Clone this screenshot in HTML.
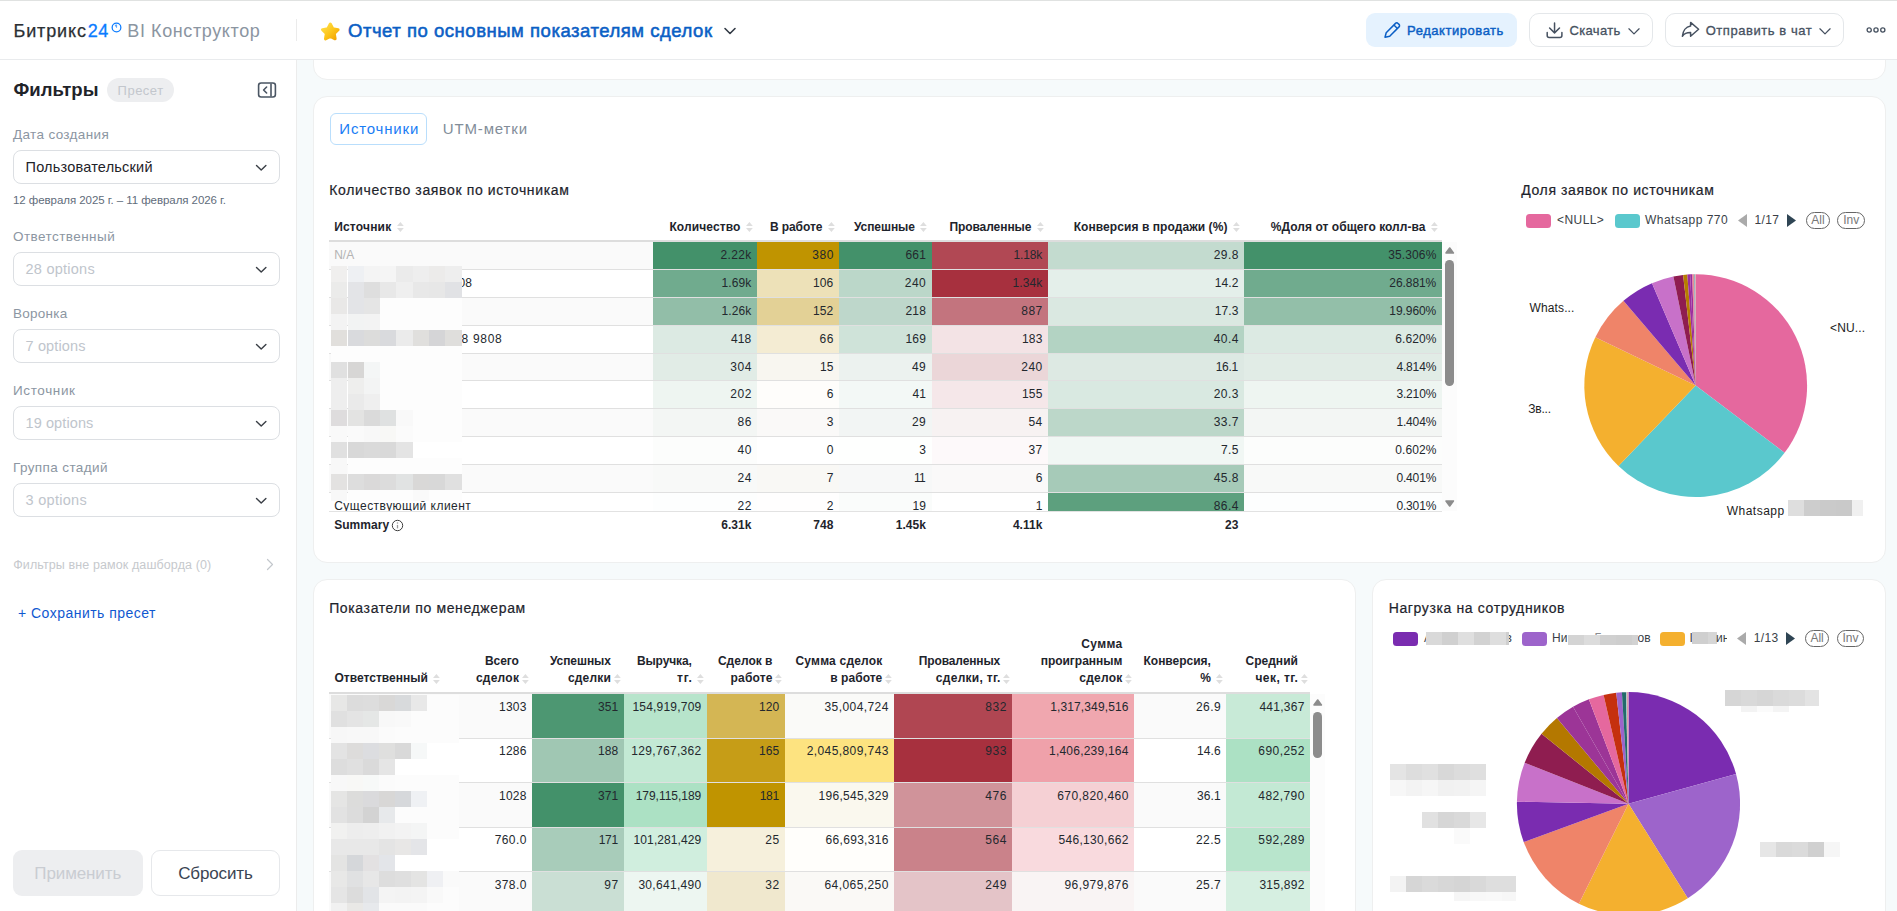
<!DOCTYPE html>
<html lang="ru"><head><meta charset="utf-8"><title>BI Конструктор</title>
<style>html,body{margin:0;padding:0}body{width:1897px;height:911px;overflow:hidden;position:relative;background:#f6fafb;font-family:"Liberation Sans", sans-serif;}
.a{position:absolute;display:block}.t{white-space:nowrap;}svg{overflow:visible}</style></head>
<body>
<div class="a" style="left:0px;top:0px;width:1897px;height:911px;background:#f6fafb;"></div>
<div class="a" style="left:313px;top:40px;width:1573px;height:40px;background:#fff;border:1px solid #eeefef;border-radius:14px;box-sizing:border-box;"></div>
<div class="a" style="left:0px;top:0px;width:1897px;height:59px;background:#fff;"></div>
<div class="a" style="left:0px;top:0px;width:1897px;height:1px;background:#e0e2e1;"></div>
<div class="a" style="left:0px;top:59px;width:1897px;height:1px;background:#e9ebed;"></div>
<div class="a t" style="top:19px;font-size:18px;line-height:24px;height:24px;color:#2b2f33;-webkit-text-stroke:0.25px #2b2f33;letter-spacing:0.874px;left:13.5px;">Битрикс</div>
<div class="a t" style="top:19px;font-size:18px;line-height:24px;height:24px;color:#0b7cff;-webkit-text-stroke:0.3px #0b7cff;letter-spacing:0.569px;left:87.7px;">24</div>
<svg class="a" style="left:110.5px;top:22.4px" width="11" height="11" viewBox="0 0 11 11"><circle cx="5.5" cy="5.5" r="4.35" fill="none" stroke="#0b7cff" stroke-width="1.25"/><path d="M5.6 5.7L4.1 3.2A2.9 2.9 0 0 1 5.7 2.8z" fill="#3b95ff" stroke="#3b95ff" stroke-width=".5" stroke-linejoin="round"/></svg>
<div class="a t" style="top:19px;font-size:18px;line-height:24px;height:24px;color:#8b95a1;letter-spacing:0.605px;left:127.3px;">BI Конструктор</div>
<div class="a" style="left:296px;top:19px;width:1px;height:22px;background:#ebebeb;"></div>
<svg class="a" style="left:320px;top:21px" width="21" height="21" viewBox="0 0 21 21"><defs><linearGradient id="sg" x1="0" y1="0" x2="1" y2="1"><stop offset="0" stop-color="#ffe14d"/><stop offset=".55" stop-color="#fcc419"/><stop offset="1" stop-color="#f2a100"/></linearGradient></defs><path d="M10.30 3.00L12.77 7.80L18.10 8.67L14.29 12.50L15.12 17.83L10.30 15.40L5.48 17.83L6.31 12.50L2.50 8.67L7.83 7.80Z" fill="url(#sg)" stroke="url(#sg)" stroke-width="3" stroke-linejoin="round"/></svg>
<div class="a t" style="top:18px;font-size:18.5px;line-height:25px;height:25px;color:#0b5fc5;-webkit-text-stroke:0.55px #0b5fc5;letter-spacing:0.530px;left:348px;">Отчет по основным показателям сделок</div>
<svg class="a" style="left:723px;top:26px" width="14" height="10" viewBox="0 0 14 10"><path d="M2 2.5l5 5 5-5" fill="none" stroke="#333b46" stroke-width="1.6" stroke-linecap="round" stroke-linejoin="round"/></svg>
<div class="a" style="left:1366px;top:13px;width:151px;height:34px;background:#e5f2fe;border-radius:9px;"></div>
<svg class="a" style="left:1383.5px;top:21.7px" width="17" height="17" viewBox="0 0 17 17"><path d="M1 15.2L2.2 10.7 11.5 1.4a1.75 1.75 0 0 1 2.5 0L15 2.4a1.75 1.75 0 0 1 0 2.5L5.7 14.2z M9.9 3L13.4 6.5" fill="none" stroke="#0b5fc5" stroke-width="1.5" stroke-linejoin="round" stroke-linecap="round"/></svg>
<div class="a t" style="top:21px;font-size:13px;line-height:19px;height:19px;color:#0b5fc5;-webkit-text-stroke:0.45px #0b5fc5;letter-spacing:0.541px;left:1407.1px;">Редактировать</div>
<div class="a" style="left:1529px;top:13px;width:124px;height:34px;background:#fff;border:1px solid #e4e7ea;border-radius:10px;box-sizing:border-box;"></div>
<svg class="a" style="left:1546px;top:21.5px" width="17" height="17" viewBox="0 0 17 17"><path d="M8.55 0.9V10.4M3.6 6L8.55 10.9 13.5 6M1.2 10.6V13.4a2 2 0 0 0 2 2H13.9a2 2 0 0 0 2-2V10.6" fill="none" stroke="#465160" stroke-width="1.5" stroke-linecap="round" stroke-linejoin="round"/></svg>
<div class="a t" style="top:21px;font-size:13px;line-height:19px;height:19px;color:#465160;-webkit-text-stroke:0.3px #465160;letter-spacing:0.308px;left:1569.6px;">Скачать</div>
<svg class="a" style="left:1628.3px;top:27.5px" width="12" height="7" viewBox="0 0 12 7"><path d="M0.9 0.8l5.1 5.1 5.1-5.1" fill="none" stroke="#465160" stroke-width="1.25" stroke-linecap="round" stroke-linejoin="round"/></svg>
<div class="a" style="left:1665px;top:13px;width:179px;height:34px;background:#fff;border:1px solid #e4e7ea;border-radius:10px;box-sizing:border-box;"></div>
<svg class="a" style="left:1681px;top:21px" width="19" height="17" viewBox="0 0 19 17"><path d="M9.6 1.4L17.6 8.3 9.6 15.2V11.6C5.7 11.5 3.3 12.6 1.4 15.2 1.9 10.2 4.7 5.7 9.6 5.1z" fill="none" stroke="#465160" stroke-width="1.5" stroke-linejoin="round"/></svg>
<div class="a t" style="top:21px;font-size:13px;line-height:19px;height:19px;color:#465160;-webkit-text-stroke:0.3px #465160;letter-spacing:0.552px;left:1705.7px;">Отправить в чат</div>
<svg class="a" style="left:1819.2px;top:27.5px" width="12" height="7" viewBox="0 0 12 7"><path d="M0.9 0.8l5.1 5.1 5.1-5.1" fill="none" stroke="#465160" stroke-width="1.25" stroke-linecap="round" stroke-linejoin="round"/></svg>
<svg class="a" style="left:1866px;top:26px" width="20" height="8" viewBox="0 0 20 8"><circle cx="3.2" cy="4" r="2.1" fill="none" stroke="#465160" stroke-width="1.3"/><circle cx="10" cy="4" r="2.1" fill="none" stroke="#465160" stroke-width="1.3"/><circle cx="16.8" cy="4" r="2.1" fill="none" stroke="#465160" stroke-width="1.3"/></svg>
<div class="a" style="left:0px;top:60px;width:296px;height:851px;background:#fff;"></div>
<div class="a" style="left:296px;top:60px;width:1px;height:851px;background:#ececec;"></div>
<div class="a t" style="top:77px;font-size:18.5px;line-height:25px;height:25px;color:#1f2329;font-weight:700;letter-spacing:0.029px;left:13.5px;">Фильтры</div>
<div class="a" style="left:107px;top:78px;width:67px;height:24px;background:#edeef0;border-radius:12px;"></div>
<div class="a t" style="top:81px;font-size:13px;line-height:19px;height:19px;color:#c3c7cd;letter-spacing:0.489px;left:117.6px;">Пресет</div>
<svg class="a" style="left:257px;top:81px" width="20" height="18" viewBox="0 0 20 18"><rect x="1.6" y="2" width="16.8" height="14" rx="2.5" fill="none" stroke="#4a5563" stroke-width="1.6"/><path d="M14 2.5v13" stroke="#4a5563" stroke-width="1.6"/><path d="M9.6 6l-3 3 3 3" fill="none" stroke="#4a5563" stroke-width="1.6" stroke-linecap="round" stroke-linejoin="round"/></svg>
<div class="a t" style="top:125px;font-size:13.5px;line-height:19px;height:19px;color:#8c96a2;letter-spacing:0.350px;left:13px;">Дата создания</div>
<div class="a" style="left:13px;top:150px;width:267px;height:34px;background:#fff;border:1px solid #dcdfe3;border-radius:8px;box-sizing:border-box;"></div>
<div class="a t" style="top:157px;font-size:14.5px;line-height:20px;height:20px;color:#1f2329;letter-spacing:0.207px;left:25.5px;">Пользовательский</div>
<svg class="a" style="left:255px;top:164px" width="13" height="8" viewBox="0 0 13 8"><path d="M1.5 1.5l4.7 4.6 4.7-4.6" fill="none" stroke="#3a3f46" stroke-width="1.4" stroke-linecap="round" stroke-linejoin="round"/></svg>
<div class="a t" style="top:227px;font-size:13.5px;line-height:19px;height:19px;color:#8c96a2;letter-spacing:0.440px;left:13px;">Ответственный</div>
<div class="a" style="left:13px;top:252px;width:267px;height:34px;background:#fff;border:1px solid #dcdfe3;border-radius:8px;box-sizing:border-box;"></div>
<div class="a t" style="top:259px;font-size:14.5px;line-height:20px;height:20px;color:#c0c5cc;letter-spacing:0.253px;left:25.5px;">28 options</div>
<svg class="a" style="left:255px;top:266px" width="13" height="8" viewBox="0 0 13 8"><path d="M1.5 1.5l4.7 4.6 4.7-4.6" fill="none" stroke="#3a3f46" stroke-width="1.4" stroke-linecap="round" stroke-linejoin="round"/></svg>
<div class="a t" style="top:304px;font-size:13.5px;line-height:19px;height:19px;color:#8c96a2;letter-spacing:0.265px;left:13px;">Воронка</div>
<div class="a" style="left:13px;top:329px;width:267px;height:34px;background:#fff;border:1px solid #dcdfe3;border-radius:8px;box-sizing:border-box;"></div>
<div class="a t" style="top:336px;font-size:14.5px;line-height:20px;height:20px;color:#c0c5cc;letter-spacing:0.143px;left:25.5px;">7 options</div>
<svg class="a" style="left:255px;top:343px" width="13" height="8" viewBox="0 0 13 8"><path d="M1.5 1.5l4.7 4.6 4.7-4.6" fill="none" stroke="#3a3f46" stroke-width="1.4" stroke-linecap="round" stroke-linejoin="round"/></svg>
<div class="a t" style="top:381px;font-size:13.5px;line-height:19px;height:19px;color:#8c96a2;letter-spacing:0.623px;left:13px;">Источник</div>
<div class="a" style="left:13px;top:406px;width:267px;height:34px;background:#fff;border:1px solid #dcdfe3;border-radius:8px;box-sizing:border-box;"></div>
<div class="a t" style="top:413px;font-size:14.5px;line-height:20px;height:20px;color:#c0c5cc;letter-spacing:0.098px;left:25.5px;">19 options</div>
<svg class="a" style="left:255px;top:420px" width="13" height="8" viewBox="0 0 13 8"><path d="M1.5 1.5l4.7 4.6 4.7-4.6" fill="none" stroke="#3a3f46" stroke-width="1.4" stroke-linecap="round" stroke-linejoin="round"/></svg>
<div class="a t" style="top:458px;font-size:13.5px;line-height:19px;height:19px;color:#8c96a2;letter-spacing:0.392px;left:13px;">Группа стадий</div>
<div class="a" style="left:13px;top:483px;width:267px;height:34px;background:#fff;border:1px solid #dcdfe3;border-radius:8px;box-sizing:border-box;"></div>
<div class="a t" style="top:490px;font-size:14.5px;line-height:20px;height:20px;color:#c0c5cc;letter-spacing:0.293px;left:25.5px;">3 options</div>
<svg class="a" style="left:255px;top:497px" width="13" height="8" viewBox="0 0 13 8"><path d="M1.5 1.5l4.7 4.6 4.7-4.6" fill="none" stroke="#3a3f46" stroke-width="1.4" stroke-linecap="round" stroke-linejoin="round"/></svg>
<div class="a t" style="top:192px;font-size:11.5px;line-height:16px;height:16px;color:#5f6c7b;letter-spacing:-0.058px;left:13px;">12 февраля 2025 г. – 11 февраля 2026 г.</div>
<div class="a t" style="top:556px;font-size:12.5px;line-height:18px;height:18px;color:#c6c9cd;letter-spacing:0.108px;left:13.2px;">Фильтры вне рамок дашборда (0)</div>
<svg class="a" style="left:265px;top:558px" width="10" height="13" viewBox="0 0 10 13"><path d="M2.5 1.5l5 5-5 5" fill="none" stroke="#c3c7cc" stroke-width="1.2" stroke-linecap="round" stroke-linejoin="round"/></svg>
<div class="a t" style="top:603px;font-size:14px;line-height:20px;height:20px;color:#1058d0;letter-spacing:0.475px;left:18px;">+ Сохранить пресет</div>
<div class="a" style="left:13px;top:850px;width:130px;height:46px;background:#edeef0;border-radius:9px;"></div>
<div class="a t" style="top:862px;font-size:17px;line-height:23px;height:23px;color:#c9ccd2;letter-spacing:-0.106px;left:34.3px;">Применить</div>
<div class="a" style="left:151px;top:850px;width:129px;height:46px;background:#fff;border:1px solid #e6e8eb;border-radius:9px;box-sizing:border-box;"></div>
<div class="a t" style="top:862px;font-size:17px;line-height:23px;height:23px;color:#3a4452;letter-spacing:-0.139px;left:178.2px;">Сбросить</div>
<div class="a" style="left:313px;top:96px;width:1573px;height:467px;background:#fff;border:1px solid #eeefef;border-radius:14px;box-sizing:border-box;"></div>
<div class="a" style="left:313px;top:579px;width:1043px;height:360px;background:#fff;border:1px solid #eeefef;border-radius:14px;box-sizing:border-box;"></div>
<div class="a" style="left:1372px;top:579px;width:514px;height:360px;background:#fff;border:1px solid #eeefef;border-radius:14px;box-sizing:border-box;"></div>
<div class="a" style="left:330px;top:113px;width:97px;height:32px;background:#fff;border:1px solid #b9defc;border-radius:6px;box-sizing:border-box;"></div>
<div class="a t" style="top:118px;font-size:15px;line-height:21px;height:21px;color:#1a7df5;letter-spacing:0.823px;left:339.3px;">Источники</div>
<div class="a t" style="top:118px;font-size:15px;line-height:21px;height:21px;color:#828d99;letter-spacing:0.856px;left:442.8px;">UTM-метки</div>
<div class="a t" style="top:180px;font-size:14px;line-height:20px;height:20px;color:#1e242c;-webkit-text-stroke:0.2px #1e242c;letter-spacing:0.635px;left:329.3px;">Количество заявок по источникам</div>
<div class="a t" style="top:218px;font-size:12px;line-height:18px;height:18px;color:#1e242c;font-weight:700;letter-spacing:0.193px;left:334.2px;">Источник</div>
<svg class="a" style="left:396.7px;top:222px" width="6.8" height="10" viewBox="0 0 6.8 10"><path d="M0 3.9L3.4 0 6.8 3.9z M0 6.1L3.4 10 6.8 6.1z" fill="#dedede"/></svg>
<div class="a t" style="top:218px;font-size:12px;line-height:18px;height:18px;color:#1e242c;font-weight:700;letter-spacing:0.117px;right:1156.48px;">Количество</div>
<svg class="a" style="left:745.7px;top:222px" width="6.8" height="10" viewBox="0 0 6.8 10"><path d="M0 3.9L3.4 0 6.8 3.9z M0 6.1L3.4 10 6.8 6.1z" fill="#dedede"/></svg>
<div class="a t" style="top:218px;font-size:12px;line-height:18px;height:18px;color:#1e242c;font-weight:700;letter-spacing:-0.072px;right:1074.67px;">В работе</div>
<svg class="a" style="left:827.7px;top:222px" width="6.8" height="10" viewBox="0 0 6.8 10"><path d="M0 3.9L3.4 0 6.8 3.9z M0 6.1L3.4 10 6.8 6.1z" fill="#dedede"/></svg>
<div class="a t" style="top:218px;font-size:12px;line-height:18px;height:18px;color:#1e242c;font-weight:700;letter-spacing:-0.070px;right:982.17px;">Успешные</div>
<svg class="a" style="left:920.2px;top:222px" width="6.8" height="10" viewBox="0 0 6.8 10"><path d="M0 3.9L3.4 0 6.8 3.9z M0 6.1L3.4 10 6.8 6.1z" fill="#dedede"/></svg>
<div class="a t" style="top:218px;font-size:12px;line-height:18px;height:18px;color:#1e242c;font-weight:700;letter-spacing:-0.074px;right:865.674px;">Проваленные</div>
<svg class="a" style="left:1036.7px;top:222px" width="6.8" height="10" viewBox="0 0 6.8 10"><path d="M0 3.9L3.4 0 6.8 3.9z M0 6.1L3.4 10 6.8 6.1z" fill="#dedede"/></svg>
<div class="a t" style="top:218px;font-size:12px;line-height:18px;height:18px;color:#1e242c;font-weight:700;letter-spacing:0.070px;right:669.53px;">Конверсия в продажи (%)</div>
<svg class="a" style="left:1232.7px;top:222px" width="6.8" height="10" viewBox="0 0 6.8 10"><path d="M0 3.9L3.4 0 6.8 3.9z M0 6.1L3.4 10 6.8 6.1z" fill="#dedede"/></svg>
<div class="a t" style="top:218px;font-size:12px;line-height:18px;height:18px;color:#1e242c;font-weight:700;letter-spacing:0.042px;right:471.558px;">%Доля от общего колл-ва</div>
<svg class="a" style="left:1430.7px;top:222px" width="6.8" height="10" viewBox="0 0 6.8 10"><path d="M0 3.9L3.4 0 6.8 3.9z M0 6.1L3.4 10 6.8 6.1z" fill="#dedede"/></svg>
<div class="a" style="left:329px;top:240px;width:1113px;height:2px;background:#dddddd;"></div>
<div class="a" style="left:329px;top:242px;width:1113px;height:27px;background:#fafafa;"></div>
<div class="a" style="left:653px;top:242px;width:104px;height:27px;background:#43916a;"></div>
<div class="a" style="left:757px;top:242px;width:82px;height:27px;background:#c09400;"></div>
<div class="a" style="left:839px;top:242px;width:92.5px;height:27px;background:#43916a;"></div>
<div class="a" style="left:931.5px;top:242px;width:116.5px;height:27px;background:#b14854;"></div>
<div class="a" style="left:1048px;top:242px;width:196px;height:27px;background:#c3dbcf;"></div>
<div class="a" style="left:1244px;top:242px;width:198px;height:27px;background:#43916a;"></div>
<div class="a t" style="top:246px;font-size:12px;line-height:18px;height:18px;color:#23282e;letter-spacing:0.369px;right:1145.33px;">2.22k</div>
<div class="a t" style="top:246px;font-size:12px;line-height:18px;height:18px;color:#23282e;letter-spacing:0.526px;right:1063.17px;">380</div>
<div class="a t" style="top:246px;font-size:12px;line-height:18px;height:18px;color:#23282e;letter-spacing:0.093px;right:971.107px;">661</div>
<div class="a t" style="top:246px;font-size:12px;line-height:18px;height:18px;color:#23282e;letter-spacing:-0.151px;right:854.851px;">1.18k</div>
<div class="a t" style="top:246px;font-size:12px;line-height:18px;height:18px;color:#23282e;letter-spacing:0.411px;right:658.289px;">29.8</div>
<div class="a t" style="top:246px;font-size:12px;line-height:18px;height:18px;color:#23282e;letter-spacing:0.118px;right:460.582px;">35.306%</div>
<div class="a t" style="top:246px;font-size:12px;line-height:18px;height:18px;color:#b3b3b3;left:334.2px;">N/A</div>
<div class="a" style="left:329px;top:270px;width:1113px;height:27px;background:#ffffff;"></div>
<div class="a" style="left:653px;top:270px;width:104px;height:27px;background:#70ab8e;"></div>
<div class="a" style="left:757px;top:270px;width:82px;height:27px;background:#ede1b8;"></div>
<div class="a" style="left:839px;top:270px;width:92.5px;height:27px;background:#bbd7c9;"></div>
<div class="a" style="left:931.5px;top:270px;width:116.5px;height:27px;background:#a7303e;"></div>
<div class="a" style="left:1048px;top:270px;width:196px;height:27px;background:#e4efea;"></div>
<div class="a" style="left:1244px;top:270px;width:198px;height:27px;background:#70ab8e;"></div>
<div class="a" style="left:329px;top:269px;width:1113px;height:1px;background:#e0e0e0;"></div>
<div class="a t" style="top:274px;font-size:12px;line-height:18px;height:18px;color:#23282e;letter-spacing:0.109px;right:1145.59px;">1.69k</div>
<div class="a t" style="top:274px;font-size:12px;line-height:18px;height:18px;color:#23282e;letter-spacing:0.093px;right:1063.61px;">106</div>
<div class="a t" style="top:274px;font-size:12px;line-height:18px;height:18px;color:#23282e;letter-spacing:0.526px;right:970.674px;">240</div>
<div class="a t" style="top:274px;font-size:12px;line-height:18px;height:18px;color:#23282e;letter-spacing:0.109px;right:854.591px;">1.34k</div>
<div class="a t" style="top:274px;font-size:12px;line-height:18px;height:18px;color:#23282e;letter-spacing:0.086px;right:658.614px;">14.2</div>
<div class="a t" style="top:274px;font-size:12px;line-height:18px;height:18px;color:#23282e;letter-spacing:-0.068px;right:460.768px;">26.881%</div>
<div class="a" style="left:329px;top:298px;width:1113px;height:27px;background:#fafafa;"></div>
<div class="a" style="left:653px;top:298px;width:104px;height:27px;background:#92bea8;"></div>
<div class="a" style="left:757px;top:298px;width:82px;height:27px;background:#e3d196;"></div>
<div class="a" style="left:839px;top:298px;width:92.5px;height:27px;background:#bed7cb;"></div>
<div class="a" style="left:931.5px;top:298px;width:116.5px;height:27px;background:#c3747e;"></div>
<div class="a" style="left:1048px;top:298px;width:196px;height:27px;background:#dae8e1;"></div>
<div class="a" style="left:1244px;top:298px;width:198px;height:27px;background:#93bfa9;"></div>
<div class="a" style="left:329px;top:297px;width:1113px;height:1px;background:#e0e0e0;"></div>
<div class="a t" style="top:302px;font-size:12px;line-height:18px;height:18px;color:#23282e;letter-spacing:0.109px;right:1145.59px;">1.26k</div>
<div class="a t" style="top:302px;font-size:12px;line-height:18px;height:18px;color:#23282e;letter-spacing:0.093px;right:1063.61px;">152</div>
<div class="a t" style="top:302px;font-size:12px;line-height:18px;height:18px;color:#23282e;letter-spacing:0.093px;right:971.107px;">218</div>
<div class="a t" style="top:302px;font-size:12px;line-height:18px;height:18px;color:#23282e;letter-spacing:0.526px;right:854.174px;">887</div>
<div class="a t" style="top:302px;font-size:12px;line-height:18px;height:18px;color:#23282e;letter-spacing:0.086px;right:658.614px;">17.3</div>
<div class="a t" style="top:302px;font-size:12px;line-height:18px;height:18px;color:#23282e;letter-spacing:-0.068px;right:460.768px;">19.960%</div>
<div class="a" style="left:329px;top:326px;width:1113px;height:27px;background:#ffffff;"></div>
<div class="a" style="left:653px;top:326px;width:104px;height:27px;background:#dceae3;"></div>
<div class="a" style="left:757px;top:326px;width:82px;height:27px;background:#f4ecd3;"></div>
<div class="a" style="left:839px;top:326px;width:92.5px;height:27px;background:#cfe3d9;"></div>
<div class="a" style="left:931.5px;top:326px;width:116.5px;height:27px;background:#f3e3e5;"></div>
<div class="a" style="left:1048px;top:326px;width:196px;height:27px;background:#b3d3c3;"></div>
<div class="a" style="left:1244px;top:326px;width:198px;height:27px;background:#dceae3;"></div>
<div class="a" style="left:329px;top:325px;width:1113px;height:1px;background:#e0e0e0;"></div>
<div class="a t" style="top:330px;font-size:12px;line-height:18px;height:18px;color:#23282e;letter-spacing:0.093px;right:1145.61px;">418</div>
<div class="a t" style="top:330px;font-size:12px;line-height:18px;height:18px;color:#23282e;letter-spacing:0.526px;right:1063.17px;">66</div>
<div class="a t" style="top:330px;font-size:12px;line-height:18px;height:18px;color:#23282e;letter-spacing:0.093px;right:971.107px;">169</div>
<div class="a t" style="top:330px;font-size:12px;line-height:18px;height:18px;color:#23282e;letter-spacing:0.093px;right:854.607px;">183</div>
<div class="a t" style="top:330px;font-size:12px;line-height:18px;height:18px;color:#23282e;letter-spacing:0.411px;right:658.289px;">40.4</div>
<div class="a t" style="top:330px;font-size:12px;line-height:18px;height:18px;color:#23282e;letter-spacing:0.050px;right:460.65px;">6.620%</div>
<div class="a" style="left:329px;top:354px;width:1113px;height:26px;background:#fafafa;"></div>
<div class="a" style="left:653px;top:354px;width:104px;height:26px;background:#e1ece6;"></div>
<div class="a" style="left:757px;top:354px;width:82px;height:26px;background:#f8f6f0;"></div>
<div class="a" style="left:839px;top:354px;width:92.5px;height:26px;background:#ecf2ef;"></div>
<div class="a" style="left:931.5px;top:354px;width:116.5px;height:26px;background:#ebd6d8;"></div>
<div class="a" style="left:1048px;top:354px;width:196px;height:26px;background:#dde9e3;"></div>
<div class="a" style="left:1244px;top:354px;width:198px;height:26px;background:#e1ece6;"></div>
<div class="a" style="left:329px;top:353px;width:1113px;height:1px;background:#e0e0e0;"></div>
<div class="a t" style="top:358px;font-size:12px;line-height:18px;height:18px;color:#23282e;letter-spacing:0.526px;right:1145.17px;">304</div>
<div class="a t" style="top:358px;font-size:12px;line-height:18px;height:18px;color:#23282e;letter-spacing:-0.124px;right:1063.82px;">15</div>
<div class="a t" style="top:358px;font-size:12px;line-height:18px;height:18px;color:#23282e;letter-spacing:0.526px;right:970.674px;">49</div>
<div class="a t" style="top:358px;font-size:12px;line-height:18px;height:18px;color:#23282e;letter-spacing:0.526px;right:854.174px;">240</div>
<div class="a t" style="top:358px;font-size:12px;line-height:18px;height:18px;color:#23282e;letter-spacing:-0.239px;right:658.939px;">16.1</div>
<div class="a t" style="top:358px;font-size:12px;line-height:18px;height:18px;color:#23282e;letter-spacing:-0.167px;right:460.867px;">4.814%</div>
<div class="a" style="left:329px;top:381px;width:1113px;height:27px;background:#ffffff;"></div>
<div class="a" style="left:653px;top:381px;width:104px;height:27px;background:#eef5f1;"></div>
<div class="a" style="left:757px;top:381px;width:82px;height:27px;background:#fefdfb;"></div>
<div class="a" style="left:839px;top:381px;width:92.5px;height:27px;background:#f3f8f6;"></div>
<div class="a" style="left:931.5px;top:381px;width:116.5px;height:27px;background:#f5e7e9;"></div>
<div class="a" style="left:1048px;top:381px;width:196px;height:27px;background:#d9e9e1;"></div>
<div class="a" style="left:1244px;top:381px;width:198px;height:27px;background:#eef5f1;"></div>
<div class="a" style="left:329px;top:380px;width:1113px;height:1px;background:#e0e0e0;"></div>
<div class="a t" style="top:385px;font-size:12px;line-height:18px;height:18px;color:#23282e;letter-spacing:0.526px;right:1145.17px;">202</div>
<div class="a t" style="top:385px;font-size:12px;line-height:18px;height:18px;color:#23282e;letter-spacing:0.526px;right:1063.17px;">6</div>
<div class="a t" style="top:385px;font-size:12px;line-height:18px;height:18px;color:#23282e;letter-spacing:-0.124px;right:971.324px;">41</div>
<div class="a t" style="top:385px;font-size:12px;line-height:18px;height:18px;color:#23282e;letter-spacing:0.093px;right:854.607px;">155</div>
<div class="a t" style="top:385px;font-size:12px;line-height:18px;height:18px;color:#23282e;letter-spacing:0.411px;right:658.289px;">20.3</div>
<div class="a t" style="top:385px;font-size:12px;line-height:18px;height:18px;color:#23282e;letter-spacing:-0.167px;right:460.867px;">3.210%</div>
<div class="a" style="left:329px;top:409px;width:1113px;height:27px;background:#fafafa;"></div>
<div class="a" style="left:653px;top:409px;width:104px;height:27px;background:#f3f6f4;"></div>
<div class="a" style="left:757px;top:409px;width:82px;height:27px;background:#faf9f8;"></div>
<div class="a" style="left:839px;top:409px;width:92.5px;height:27px;background:#f2f5f4;"></div>
<div class="a" style="left:931.5px;top:409px;width:116.5px;height:27px;background:#f7f2f2;"></div>
<div class="a" style="left:1048px;top:409px;width:196px;height:27px;background:#bcd7c9;"></div>
<div class="a" style="left:1244px;top:409px;width:198px;height:27px;background:#f3f6f4;"></div>
<div class="a" style="left:329px;top:408px;width:1113px;height:1px;background:#e0e0e0;"></div>
<div class="a t" style="top:413px;font-size:12px;line-height:18px;height:18px;color:#23282e;letter-spacing:0.526px;right:1145.17px;">86</div>
<div class="a t" style="top:413px;font-size:12px;line-height:18px;height:18px;color:#23282e;letter-spacing:0.526px;right:1063.17px;">3</div>
<div class="a t" style="top:413px;font-size:12px;line-height:18px;height:18px;color:#23282e;letter-spacing:0.526px;right:970.674px;">29</div>
<div class="a t" style="top:413px;font-size:12px;line-height:18px;height:18px;color:#23282e;letter-spacing:0.526px;right:854.174px;">54</div>
<div class="a t" style="top:413px;font-size:12px;line-height:18px;height:18px;color:#23282e;letter-spacing:0.411px;right:658.289px;">33.7</div>
<div class="a t" style="top:413px;font-size:12px;line-height:18px;height:18px;color:#23282e;letter-spacing:-0.167px;right:460.867px;">1.404%</div>
<div class="a" style="left:329px;top:437px;width:1113px;height:27px;background:#ffffff;"></div>
<div class="a" style="left:653px;top:437px;width:104px;height:27px;background:#fcfdfc;"></div>
<div class="a" style="left:757px;top:437px;width:82px;height:27px;background:#ffffff;"></div>
<div class="a" style="left:839px;top:437px;width:92.5px;height:27px;background:#fefffe;"></div>
<div class="a" style="left:931.5px;top:437px;width:116.5px;height:27px;background:#fdf9fa;"></div>
<div class="a" style="left:1048px;top:437px;width:196px;height:27px;background:#f1f7f4;"></div>
<div class="a" style="left:1244px;top:437px;width:198px;height:27px;background:#fcfdfc;"></div>
<div class="a" style="left:329px;top:436px;width:1113px;height:1px;background:#e0e0e0;"></div>
<div class="a t" style="top:441px;font-size:12px;line-height:18px;height:18px;color:#23282e;letter-spacing:0.526px;right:1145.17px;">40</div>
<div class="a t" style="top:441px;font-size:12px;line-height:18px;height:18px;color:#23282e;letter-spacing:0.526px;right:1063.17px;">0</div>
<div class="a t" style="top:441px;font-size:12px;line-height:18px;height:18px;color:#23282e;letter-spacing:0.526px;right:970.674px;">3</div>
<div class="a t" style="top:441px;font-size:12px;line-height:18px;height:18px;color:#23282e;letter-spacing:0.526px;right:854.174px;">37</div>
<div class="a t" style="top:441px;font-size:12px;line-height:18px;height:18px;color:#23282e;letter-spacing:0.373px;right:658.327px;">7.5</div>
<div class="a t" style="top:441px;font-size:12px;line-height:18px;height:18px;color:#23282e;letter-spacing:0.050px;right:460.65px;">0.602%</div>
<div class="a" style="left:329px;top:465px;width:1113px;height:27px;background:#fafafa;"></div>
<div class="a" style="left:653px;top:465px;width:104px;height:27px;background:#f8f9f8;"></div>
<div class="a" style="left:757px;top:465px;width:82px;height:27px;background:#f9f8f5;"></div>
<div class="a" style="left:839px;top:465px;width:92.5px;height:27px;background:#f7f8f8;"></div>
<div class="a" style="left:931.5px;top:465px;width:116.5px;height:27px;background:#faf9f9;"></div>
<div class="a" style="left:1048px;top:465px;width:196px;height:27px;background:#a6cab8;"></div>
<div class="a" style="left:1244px;top:465px;width:198px;height:27px;background:#f8f9f8;"></div>
<div class="a" style="left:329px;top:464px;width:1113px;height:1px;background:#e0e0e0;"></div>
<div class="a t" style="top:469px;font-size:12px;line-height:18px;height:18px;color:#23282e;letter-spacing:0.526px;right:1145.17px;">24</div>
<div class="a t" style="top:469px;font-size:12px;line-height:18px;height:18px;color:#23282e;letter-spacing:0.526px;right:1063.17px;">7</div>
<div class="a t" style="top:469px;font-size:12px;line-height:18px;height:18px;color:#23282e;letter-spacing:-0.600px;right:971.8px;">11</div>
<div class="a t" style="top:469px;font-size:12px;line-height:18px;height:18px;color:#23282e;letter-spacing:0.526px;right:854.174px;">6</div>
<div class="a t" style="top:469px;font-size:12px;line-height:18px;height:18px;color:#23282e;letter-spacing:0.411px;right:658.289px;">45.8</div>
<div class="a t" style="top:469px;font-size:12px;line-height:18px;height:18px;color:#23282e;letter-spacing:-0.167px;right:460.867px;">0.401%</div>
<div class="a" style="left:329px;top:493px;width:1113px;height:18.3px;background:#ffffff;"></div>
<div class="a" style="left:653px;top:493px;width:104px;height:18.3px;background:#fdfefe;"></div>
<div class="a" style="left:757px;top:493px;width:82px;height:18.3px;background:#fffefe;"></div>
<div class="a" style="left:839px;top:493px;width:92.5px;height:18.3px;background:#fafcfb;"></div>
<div class="a" style="left:931.5px;top:493px;width:116.5px;height:18.3px;background:#ffffff;"></div>
<div class="a" style="left:1048px;top:493px;width:196px;height:18.3px;background:#5da07e;"></div>
<div class="a" style="left:1244px;top:493px;width:198px;height:18.3px;background:#fdfefe;"></div>
<div class="a" style="left:329px;top:492px;width:1113px;height:1px;background:#e0e0e0;"></div>
<div class="a t" style="top:497px;font-size:12px;line-height:18px;height:18px;color:#23282e;letter-spacing:0.526px;right:1145.17px;">22</div>
<div class="a t" style="top:497px;font-size:12px;line-height:18px;height:18px;color:#23282e;letter-spacing:0.526px;right:1063.17px;">2</div>
<div class="a t" style="top:497px;font-size:12px;line-height:18px;height:18px;color:#23282e;letter-spacing:-0.124px;right:971.324px;">19</div>
<div class="a t" style="top:497px;font-size:12px;line-height:18px;height:18px;color:#23282e;letter-spacing:-0.600px;right:855.3px;">1</div>
<div class="a t" style="top:497px;font-size:12px;line-height:18px;height:18px;color:#23282e;letter-spacing:0.411px;right:658.289px;">86.4</div>
<div class="a t" style="top:497px;font-size:12px;line-height:18px;height:18px;color:#23282e;letter-spacing:-0.167px;right:460.867px;">0.301%</div>
<div class="a t" style="top:497px;font-size:12px;line-height:18px;height:18px;color:#23282e;letter-spacing:0.467px;left:334.2px;">Существующий клиент</div>
<div class="a" style="left:329px;top:511.3px;width:1113px;height:1px;background:#e2e2e2;"></div>
<div class="a" style="left:329px;top:512.3px;width:1130px;height:12px;background:#fff;"></div>
<div class="a t" style="top:516px;font-size:12px;line-height:18px;height:18px;color:#1e242c;font-weight:700;letter-spacing:0.049px;left:334.2px;">Summary</div>
<svg class="a" style="left:390.6px;top:519.4px" width="13" height="13" viewBox="0 0 13 13"><circle cx="6.5" cy="6.5" r="5.2" fill="none" stroke="#3d3d3d" stroke-width="1"/><path d="M6.5 5.9v3.5" stroke="#9a9a9a" stroke-width="1.3"/><circle cx="6.5" cy="4" r=".8" fill="#9a9a9a"/></svg>
<div class="a t" style="top:516px;font-size:12px;line-height:18px;height:18px;color:#1e242c;font-weight:700;right:1145.7px;">6.31k</div>
<div class="a t" style="top:516px;font-size:12px;line-height:18px;height:18px;color:#1e242c;font-weight:700;right:1063.7px;">748</div>
<div class="a t" style="top:516px;font-size:12px;line-height:18px;height:18px;color:#1e242c;font-weight:700;right:971.2px;">1.45k</div>
<div class="a t" style="top:516px;font-size:12px;line-height:18px;height:18px;color:#1e242c;font-weight:700;right:854.7px;">4.11k</div>
<div class="a t" style="top:516px;font-size:12px;line-height:18px;height:18px;color:#1e242c;font-weight:700;right:658.7px;">23</div>
<div class="a" style="left:1442px;top:242px;width:15px;height:269.3px;background:#fcfcfc;"></div>
<svg class="a" style="left:1444.9px;top:247.2px" width="9.4" height="7" viewBox="0 0 9.4 7"><path d="M1 6L4.7 1 8.4 6z" fill="#8c8c8c" stroke="#8c8c8c" stroke-width="1.6" stroke-linejoin="round"/></svg>
<svg class="a" style="left:1444.9px;top:500.2px" width="9.4" height="7" viewBox="0 0 9.4 7"><path d="M1 1L4.7 6 8.4 1z" fill="#8c8c8c" stroke="#8c8c8c" stroke-width="1.6" stroke-linejoin="round"/></svg>
<div class="a" style="left:1445.2px;top:260px;width:8.8px;height:125.6px;background:#8c8c8c;border-radius:4.4px;"></div>
<div class="a t" style="top:274px;font-size:12px;line-height:18px;height:18px;color:#23282e;left:458.6px;">08</div>
<div class="a t" style="top:330px;font-size:12px;line-height:18px;height:18px;color:#23282e;letter-spacing:0.698px;left:461.6px;">8 9808</div>
<div class="a" style="left:331.2px;top:265.6px;width:16.3px;height:16px;background:#f0efee;"></div>
<div class="a" style="left:347.5px;top:265.6px;width:16.3px;height:16px;background:#eef0f3;"></div>
<div class="a" style="left:363.8px;top:265.6px;width:16.3px;height:16px;background:#f4f4f4;"></div>
<div class="a" style="left:380.1px;top:265.6px;width:16.3px;height:16px;background:#f5f5f5;"></div>
<div class="a" style="left:396.4px;top:265.6px;width:16.3px;height:16px;background:#ebebeb;"></div>
<div class="a" style="left:412.7px;top:265.6px;width:16.3px;height:16px;background:#eeeeee;"></div>
<div class="a" style="left:429px;top:265.6px;width:16.3px;height:16px;background:#ecebea;"></div>
<div class="a" style="left:445.3px;top:265.6px;width:16.3px;height:16px;background:#eeeeee;"></div>
<div class="a" style="left:331.2px;top:281.6px;width:16.3px;height:16px;background:#ebebea;"></div>
<div class="a" style="left:347.5px;top:281.6px;width:16.3px;height:16px;background:#e3e4e7;"></div>
<div class="a" style="left:363.8px;top:281.6px;width:16.3px;height:16px;background:#dedede;"></div>
<div class="a" style="left:380.1px;top:281.6px;width:16.3px;height:16px;background:#e8e8e8;"></div>
<div class="a" style="left:396.4px;top:281.6px;width:16.3px;height:16px;background:#efefef;"></div>
<div class="a" style="left:412.7px;top:281.6px;width:16.3px;height:16px;background:#e8e8e8;"></div>
<div class="a" style="left:429px;top:281.6px;width:16.3px;height:16px;background:#e7e7e7;"></div>
<div class="a" style="left:445.3px;top:281.6px;width:16.3px;height:16px;background:#e1e2e5;"></div>
<div class="a" style="left:331.2px;top:297.6px;width:16.3px;height:16px;background:#e9e8e7;"></div>
<div class="a" style="left:347.5px;top:297.6px;width:16.3px;height:16px;background:#e3e4e7;"></div>
<div class="a" style="left:363.8px;top:297.6px;width:16.3px;height:16px;background:#e5e5e5;"></div>
<div class="a" style="left:380.1px;top:297.6px;width:81.5px;height:16px;background:#fdfdfd;"></div>
<div class="a" style="left:331.2px;top:313.6px;width:16.3px;height:16px;background:#f3f3f3;"></div>
<div class="a" style="left:347.5px;top:313.6px;width:16.3px;height:16px;background:#f2f3f3;"></div>
<div class="a" style="left:363.8px;top:313.6px;width:16.3px;height:16px;background:#f3f3f3;"></div>
<div class="a" style="left:380.1px;top:313.6px;width:81.5px;height:16px;background:#fdfdfd;"></div>
<div class="a" style="left:331.2px;top:329.6px;width:16.3px;height:16px;background:#e1dfdc;"></div>
<div class="a" style="left:347.5px;top:329.6px;width:16.3px;height:16px;background:#d9dadd;"></div>
<div class="a" style="left:363.8px;top:329.6px;width:16.3px;height:16px;background:#dcdcdb;"></div>
<div class="a" style="left:380.1px;top:329.6px;width:16.3px;height:16px;background:#d9dadd;"></div>
<div class="a" style="left:396.4px;top:329.6px;width:16.3px;height:16px;background:#ebebeb;"></div>
<div class="a" style="left:412.7px;top:329.6px;width:16.3px;height:16px;background:#e0dfdd;"></div>
<div class="a" style="left:429px;top:329.6px;width:16.3px;height:16px;background:#d5d5d7;"></div>
<div class="a" style="left:445.3px;top:329.6px;width:16.3px;height:16px;background:#dfdedc;"></div>
<div class="a" style="left:331.2px;top:345.6px;width:130.4px;height:16px;background:#fdfdfd;"></div>
<div class="a" style="left:331.2px;top:361.6px;width:16.3px;height:16px;background:#e0e0e0;"></div>
<div class="a" style="left:347.5px;top:361.6px;width:16.3px;height:16px;background:#d7d6d5;"></div>
<div class="a" style="left:363.8px;top:361.6px;width:16.3px;height:16px;background:#f4f6f6;"></div>
<div class="a" style="left:380.1px;top:361.6px;width:81.5px;height:16px;background:#fdfdfd;"></div>
<div class="a" style="left:331.2px;top:377.6px;width:16.3px;height:16px;background:#eeeeee;"></div>
<div class="a" style="left:347.5px;top:377.6px;width:16.3px;height:16px;background:#eeeeed;"></div>
<div class="a" style="left:363.8px;top:377.6px;width:16.3px;height:16px;background:#f3f4f4;"></div>
<div class="a" style="left:380.1px;top:377.6px;width:81.5px;height:16px;background:#fdfdfd;"></div>
<div class="a" style="left:331.2px;top:393.6px;width:16.3px;height:16px;background:#eeeeee;"></div>
<div class="a" style="left:347.5px;top:393.6px;width:16.3px;height:16px;background:#eaeaea;"></div>
<div class="a" style="left:363.8px;top:393.6px;width:16.3px;height:16px;background:#efefef;"></div>
<div class="a" style="left:380.1px;top:393.6px;width:81.5px;height:16px;background:#fdfdfd;"></div>
<div class="a" style="left:331.2px;top:409.6px;width:16.3px;height:16px;background:#dedcdd;"></div>
<div class="a" style="left:347.5px;top:409.6px;width:16.3px;height:16px;background:#e3e3e2;"></div>
<div class="a" style="left:363.8px;top:409.6px;width:16.3px;height:16px;background:#dadada;"></div>
<div class="a" style="left:380.1px;top:409.6px;width:16.3px;height:16px;background:#dfe1e1;"></div>
<div class="a" style="left:396.4px;top:409.6px;width:16.3px;height:16px;background:#f9f9f9;"></div>
<div class="a" style="left:412.7px;top:409.6px;width:48.9px;height:16px;background:#fdfdfd;"></div>
<div class="a" style="left:331.2px;top:425.6px;width:16.3px;height:16px;background:#f9f9f9;"></div>
<div class="a" style="left:347.5px;top:425.6px;width:16.3px;height:16px;background:#fafafa;"></div>
<div class="a" style="left:363.8px;top:425.6px;width:16.3px;height:16px;background:#f8f8f8;"></div>
<div class="a" style="left:380.1px;top:425.6px;width:16.3px;height:16px;background:#f8f8f6;"></div>
<div class="a" style="left:396.4px;top:425.6px;width:16.3px;height:16px;background:#fbfbfb;"></div>
<div class="a" style="left:412.7px;top:425.6px;width:48.9px;height:16px;background:#fdfdfd;"></div>
<div class="a" style="left:331.2px;top:441.6px;width:16.3px;height:16px;background:#e0e0e0;"></div>
<div class="a" style="left:347.5px;top:441.6px;width:16.3px;height:16px;background:#d8d8d8;"></div>
<div class="a" style="left:363.8px;top:441.6px;width:16.3px;height:16px;background:#dadada;"></div>
<div class="a" style="left:380.1px;top:441.6px;width:16.3px;height:16px;background:#d9d9d9;"></div>
<div class="a" style="left:396.4px;top:441.6px;width:16.3px;height:16px;background:#e4e4e4;"></div>
<div class="a" style="left:412.7px;top:441.6px;width:48.9px;height:16px;background:#ffffff;"></div>
<div class="a" style="left:331.2px;top:457.6px;width:16.3px;height:16px;background:#f8f8f8;"></div>
<div class="a" style="left:347.5px;top:457.6px;width:114.1px;height:16px;background:#fdfdfd;"></div>
<div class="a" style="left:331.2px;top:473.6px;width:16.3px;height:16px;background:#e3e2e1;"></div>
<div class="a" style="left:347.5px;top:473.6px;width:16.3px;height:16px;background:#dddddd;"></div>
<div class="a" style="left:363.8px;top:473.6px;width:16.3px;height:16px;background:#dad9d9;"></div>
<div class="a" style="left:380.1px;top:473.6px;width:16.3px;height:16px;background:#dcdcdc;"></div>
<div class="a" style="left:396.4px;top:473.6px;width:16.3px;height:16px;background:#e1e3e3;"></div>
<div class="a" style="left:412.7px;top:473.6px;width:16.3px;height:16px;background:#d9d8d7;"></div>
<div class="a" style="left:429px;top:473.6px;width:16.3px;height:16px;background:#d8d8d8;"></div>
<div class="a" style="left:445.3px;top:473.6px;width:16.3px;height:16px;background:#e0e0e0;"></div>
<div class="a" style="left:331.2px;top:489.6px;width:16.3px;height:11.7px;background:#f8f8f8;"></div>
<div class="a" style="left:347.5px;top:489.6px;width:65.2px;height:11.7px;background:#fdfdfd;"></div>
<div class="a" style="left:412.7px;top:489.6px;width:16.3px;height:11.7px;background:#fafafa;"></div>
<div class="a" style="left:429px;top:489.6px;width:32.6px;height:11.7px;background:#fdfdfd;"></div>
<div class="a t" style="top:180px;font-size:14px;line-height:20px;height:20px;color:#1e242c;-webkit-text-stroke:0.2px #1e242c;letter-spacing:0.599px;left:1521.3px;">Доля заявок по источникам</div>
<svg class="a" style="left:1575px;top:265px" width="240" height="240" viewBox="0 0 240 240"><path d="M120.7 120.6L120.70 9.20A111.4 111.4 0 0 1 209.55 187.80Z" fill="#e5689e"/><path d="M120.7 120.6L209.55 187.80A111.4 111.4 0 0 1 43.49 200.90Z" fill="#5ac8cd"/><path d="M120.7 120.6L43.49 200.90A111.4 111.4 0 0 1 20.35 72.23Z" fill="#f4b02f"/><path d="M120.7 120.6L20.35 72.23A111.4 111.4 0 0 1 48.45 35.81Z" fill="#ef8469"/><path d="M120.7 120.6L48.45 35.81A111.4 111.4 0 0 1 76.98 18.14Z" fill="#7a2cb1"/><path d="M120.7 120.6L76.98 18.14A111.4 111.4 0 0 1 98.40 11.46Z" fill="#c871c9"/><path d="M120.7 120.6L98.40 11.46A111.4 111.4 0 0 1 108.10 9.91Z" fill="#8f1d50"/><path d="M120.7 120.6L108.10 9.91A111.4 111.4 0 0 1 112.29 9.52Z" fill="#b67d00"/><path d="M120.7 120.6L112.29 9.52A111.4 111.4 0 0 1 115.10 9.34Z" fill="#9c2f9e"/><path d="M120.7 120.6L115.10 9.34A111.4 111.4 0 0 1 117.20 9.25Z" fill="#9a2d9c"/><path d="M120.7 120.6L117.20 9.25A111.4 111.4 0 0 1 118.11 9.23Z" fill="#ec6f95"/><path d="M120.7 120.6L118.11 9.23A111.4 111.4 0 0 1 118.81 9.22Z" fill="#d9706a"/><path d="M120.7 120.6L118.81 9.22A111.4 111.4 0 0 1 119.30 9.21Z" fill="#b07fc0"/><path d="M120.7 120.6L119.30 9.21A111.4 111.4 0 0 1 120.21 9.20Z" fill="#6fa6ac"/><path d="M120.7 120.6L120.21 9.20A111.4 111.4 0 0 1 120.70 9.20Z" fill="#e8a090"/></svg>
<div class="a" style="left:1526px;top:213.5px;width:25px;height:14px;background:#e5689e;border-radius:3.5px;"></div>
<div class="a t" style="top:211px;font-size:12px;line-height:18px;height:18px;color:#3a3f47;letter-spacing:0.398px;left:1557.1px;">&lt;NULL&gt;</div>
<div class="a" style="left:1615px;top:213.5px;width:25px;height:14px;background:#5ac8cd;border-radius:3.5px;"></div>
<div class="a t" style="top:211px;font-size:12px;line-height:18px;height:18px;color:#3a3f47;letter-spacing:0.474px;left:1645px;">Whatsapp 770</div>
<svg class="a" style="left:1738px;top:213.8px" width="9" height="13" viewBox="0 0 9 13"><path d="M9 0L0 6.5 9 13z" fill="#aaaaaa"/></svg>
<div class="a t" style="top:211px;font-size:12px;line-height:18px;height:18px;color:#3a3f47;letter-spacing:0.376px;left:1754.5px;">1/17</div>
<svg class="a" style="left:1786.5px;top:213.8px" width="9" height="13" viewBox="0 0 9 13"><path d="M0 0L9 6.5 0 13z" fill="#2f4554"/></svg>
<div class="a" style="left:1805.5px;top:211.5px;width:24.5px;height:17px;border:1px solid #666;border-radius:8.5px;box-sizing:border-box;"></div>
<div class="a t" style="top:211px;font-size:12px;line-height:18px;height:18px;color:#777;left:1517.9px;width:600px;text-align:center;">All</div>
<div class="a" style="left:1837.3px;top:211.5px;width:27.8px;height:17px;border:1px solid #666;border-radius:8.5px;box-sizing:border-box;"></div>
<div class="a t" style="top:211px;font-size:12px;line-height:18px;height:18px;color:#777;left:1551.3px;width:600px;text-align:center;">Inv</div>
<div class="a t" style="top:299px;font-size:12px;line-height:18px;height:18px;color:#1c1c1c;letter-spacing:0.113px;left:1529.6px;">Whats...</div>
<div class="a t" style="top:319px;font-size:12px;line-height:18px;height:18px;color:#1c1c1c;letter-spacing:0.130px;left:1830px;">&lt;NU...</div>
<div class="a t" style="top:400px;font-size:12px;line-height:18px;height:18px;color:#1c1c1c;letter-spacing:-0.232px;left:1528.3px;">Зв...</div>
<div class="a t" style="top:502px;font-size:12px;line-height:18px;height:18px;color:#1c1c1c;letter-spacing:0.495px;left:1726.7px;">Whatsapp</div>
<div class="a" style="left:1787.7px;top:500px;width:16px;height:16px;background:#dedede;"></div>
<div class="a" style="left:1803.7px;top:500px;width:16px;height:16px;background:#cdcdcd;"></div>
<div class="a" style="left:1819.7px;top:500px;width:16px;height:16px;background:#cacaca;"></div>
<div class="a" style="left:1835.7px;top:500px;width:16px;height:16px;background:#c9c9c9;"></div>
<div class="a" style="left:1851.7px;top:500px;width:11px;height:16px;background:#f0f0f0;"></div>
<div class="a t" style="top:598px;font-size:14px;line-height:20px;height:20px;color:#1e242c;-webkit-text-stroke:0.2px #1e242c;letter-spacing:0.623px;left:329.2px;">Показатели по менеджерам</div>
<div class="a t" style="top:669px;font-size:12px;line-height:18px;height:18px;color:#1e242c;font-weight:700;letter-spacing:0.030px;left:334.4px;">Ответственный</div>
<svg class="a" style="left:432.8px;top:674px" width="6.8" height="10" viewBox="0 0 6.8 10"><path d="M0 3.9L3.4 0 6.8 3.9z M0 6.1L3.4 10 6.8 6.1z" fill="#dedede"/></svg>
<div class="a t" style="top:652px;font-size:12px;line-height:18px;height:18px;color:#1e242c;font-weight:700;letter-spacing:-0.047px;right:1378.15px;">Всего</div>
<div class="a t" style="top:669px;font-size:12px;line-height:18px;height:18px;color:#1e242c;font-weight:700;letter-spacing:0.245px;right:1377.86px;">сделок</div>
<svg class="a" style="left:521.8px;top:674px" width="6.8" height="10" viewBox="0 0 6.8 10"><path d="M0 3.9L3.4 0 6.8 3.9z M0 6.1L3.4 10 6.8 6.1z" fill="#dedede"/></svg>
<div class="a t" style="top:652px;font-size:12px;line-height:18px;height:18px;color:#1e242c;font-weight:700;letter-spacing:-0.070px;right:1286.17px;">Успешных</div>
<div class="a t" style="top:669px;font-size:12px;line-height:18px;height:18px;color:#1e242c;font-weight:700;letter-spacing:0.203px;right:1285.9px;">сделки</div>
<svg class="a" style="left:613.8px;top:674px" width="6.8" height="10" viewBox="0 0 6.8 10"><path d="M0 3.9L3.4 0 6.8 3.9z M0 6.1L3.4 10 6.8 6.1z" fill="#dedede"/></svg>
<div class="a t" style="top:652px;font-size:12px;line-height:18px;height:18px;color:#1e242c;font-weight:700;letter-spacing:-0.107px;right:1205.21px;">Выручка,</div>
<div class="a t" style="top:669px;font-size:12px;line-height:18px;height:18px;color:#1e242c;font-weight:700;letter-spacing:0.991px;right:1204.11px;">тг.</div>
<svg class="a" style="left:696.9px;top:674px" width="6.8" height="10" viewBox="0 0 6.8 10"><path d="M0 3.9L3.4 0 6.8 3.9z M0 6.1L3.4 10 6.8 6.1z" fill="#dedede"/></svg>
<div class="a t" style="top:652px;font-size:12px;line-height:18px;height:18px;color:#1e242c;font-weight:700;letter-spacing:0.018px;right:1124.48px;">Сделок в</div>
<div class="a t" style="top:669px;font-size:12px;line-height:18px;height:18px;color:#1e242c;font-weight:700;letter-spacing:0.198px;right:1124.3px;">работе</div>
<svg class="a" style="left:775.4px;top:674px" width="6.8" height="10" viewBox="0 0 6.8 10"><path d="M0 3.9L3.4 0 6.8 3.9z M0 6.1L3.4 10 6.8 6.1z" fill="#dedede"/></svg>
<div class="a t" style="top:652px;font-size:12px;line-height:18px;height:18px;color:#1e242c;font-weight:700;letter-spacing:0.203px;right:1014.5px;">Сумма сделок</div>
<div class="a t" style="top:669px;font-size:12px;line-height:18px;height:18px;color:#1e242c;font-weight:700;letter-spacing:0.041px;right:1014.66px;">в работе</div>
<svg class="a" style="left:885.2px;top:674px" width="6.8" height="10" viewBox="0 0 6.8 10"><path d="M0 3.9L3.4 0 6.8 3.9z M0 6.1L3.4 10 6.8 6.1z" fill="#dedede"/></svg>
<div class="a t" style="top:652px;font-size:12px;line-height:18px;height:18px;color:#1e242c;font-weight:700;letter-spacing:-0.114px;right:896.814px;">Проваленных</div>
<div class="a t" style="top:669px;font-size:12px;line-height:18px;height:18px;color:#1e242c;font-weight:700;letter-spacing:0.284px;right:896.416px;">сделки, тг.</div>
<svg class="a" style="left:1003.2px;top:674px" width="6.8" height="10" viewBox="0 0 6.8 10"><path d="M0 3.9L3.4 0 6.8 3.9z M0 6.1L3.4 10 6.8 6.1z" fill="#dedede"/></svg>
<div class="a t" style="top:635px;font-size:12px;line-height:18px;height:18px;color:#1e242c;font-weight:700;letter-spacing:0.385px;right:774.315px;">Сумма</div>
<div class="a t" style="top:652px;font-size:12px;line-height:18px;height:18px;color:#1e242c;font-weight:700;letter-spacing:-0.031px;right:774.731px;">проигранным</div>
<div class="a t" style="top:669px;font-size:12px;line-height:18px;height:18px;color:#1e242c;font-weight:700;letter-spacing:0.245px;right:774.455px;">сделок</div>
<svg class="a" style="left:1125.2px;top:674px" width="6.8" height="10" viewBox="0 0 6.8 10"><path d="M0 3.9L3.4 0 6.8 3.9z M0 6.1L3.4 10 6.8 6.1z" fill="#dedede"/></svg>
<div class="a t" style="top:652px;font-size:12px;line-height:18px;height:18px;color:#1e242c;font-weight:700;letter-spacing:-0.013px;right:686.113px;">Конверсия,</div>
<div class="a t" style="top:669px;font-size:12px;line-height:18px;height:18px;color:#1e242c;font-weight:700;right:686.1px;">%</div>
<svg class="a" style="left:1215.9px;top:674px" width="6.8" height="10" viewBox="0 0 6.8 10"><path d="M0 3.9L3.4 0 6.8 3.9z M0 6.1L3.4 10 6.8 6.1z" fill="#dedede"/></svg>
<div class="a t" style="top:652px;font-size:12px;line-height:18px;height:18px;color:#1e242c;font-weight:700;letter-spacing:0.018px;right:599.082px;">Средний</div>
<div class="a t" style="top:669px;font-size:12px;line-height:18px;height:18px;color:#1e242c;font-weight:700;letter-spacing:0.453px;right:598.647px;">чек, тг.</div>
<svg class="a" style="left:1300.8px;top:674px" width="6.8" height="10" viewBox="0 0 6.8 10"><path d="M0 3.9L3.4 0 6.8 3.9z M0 6.1L3.4 10 6.8 6.1z" fill="#dedede"/></svg>
<div class="a" style="left:329px;top:691.7px;width:981px;height:2px;background:#dddddd;"></div>
<div class="a" style="left:329px;top:693.7px;width:981px;height:44.3px;background:#fafafa;"></div>
<div class="a" style="left:532px;top:693.7px;width:91.7px;height:44.3px;background:#4d9772;"></div>
<div class="a" style="left:623.7px;top:693.7px;width:83.1px;height:44.3px;background:#b7e4cb;"></div>
<div class="a" style="left:706.8px;top:693.7px;width:77.9px;height:44.3px;background:#d4b654;"></div>
<div class="a" style="left:784.7px;top:693.7px;width:109.3px;height:44.3px;background:#fafaf8;"></div>
<div class="a" style="left:894px;top:693.7px;width:118px;height:44.3px;background:#b04652;"></div>
<div class="a" style="left:1012px;top:693.7px;width:122px;height:44.3px;background:#f0a7af;"></div>
<div class="a" style="left:1226.2px;top:693.7px;width:83.8px;height:44.3px;background:#c8ead7;"></div>
<div class="a t" style="top:698px;font-size:12px;line-height:18px;height:18px;color:#23282e;letter-spacing:0.201px;right:1370.4px;">1303</div>
<div class="a t" style="top:698px;font-size:12px;line-height:18px;height:18px;color:#23282e;letter-spacing:0.093px;right:1278.81px;">351</div>
<div class="a t" style="top:698px;font-size:12px;line-height:18px;height:18px;color:#23282e;letter-spacing:0.206px;right:1195.59px;">154,919,709</div>
<div class="a t" style="top:698px;font-size:12px;line-height:18px;height:18px;color:#23282e;letter-spacing:0.093px;right:1117.81px;">120</div>
<div class="a t" style="top:698px;font-size:12px;line-height:18px;height:18px;color:#23282e;letter-spacing:0.434px;right:1008.17px;">35,004,724</div>
<div class="a t" style="top:698px;font-size:12px;line-height:18px;height:18px;color:#23282e;letter-spacing:0.526px;right:890.074px;">832</div>
<div class="a t" style="top:698px;font-size:12px;line-height:18px;height:18px;color:#23282e;letter-spacing:0.120px;right:768.48px;">1,317,349,516</div>
<div class="a t" style="top:698px;font-size:12px;line-height:18px;height:18px;color:#23282e;letter-spacing:0.411px;right:675.989px;">26.9</div>
<div class="a t" style="top:698px;font-size:12px;line-height:18px;height:18px;color:#23282e;letter-spacing:0.275px;right:592.325px;">441,367</div>
<div class="a" style="left:329px;top:739px;width:981px;height:43px;background:#ffffff;"></div>
<div class="a" style="left:532px;top:739px;width:91.7px;height:43px;background:#a0c7b3;"></div>
<div class="a" style="left:623.7px;top:739px;width:83.1px;height:43px;background:#c3e9d4;"></div>
<div class="a" style="left:706.8px;top:739px;width:77.9px;height:43px;background:#c69d17;"></div>
<div class="a" style="left:784.7px;top:739px;width:109.3px;height:43px;background:#fde380;"></div>
<div class="a" style="left:894px;top:739px;width:118px;height:43px;background:#a7303e;"></div>
<div class="a" style="left:1012px;top:739px;width:122px;height:43px;background:#efa1aa;"></div>
<div class="a" style="left:1226.2px;top:739px;width:83.8px;height:43px;background:#ace1c4;"></div>
<div class="a" style="left:329px;top:738px;width:981px;height:1px;background:#e0e0e0;"></div>
<div class="a t" style="top:742px;font-size:12px;line-height:18px;height:18px;color:#23282e;letter-spacing:0.201px;right:1370.4px;">1286</div>
<div class="a t" style="top:742px;font-size:12px;line-height:18px;height:18px;color:#23282e;letter-spacing:0.093px;right:1278.81px;">188</div>
<div class="a t" style="top:742px;font-size:12px;line-height:18px;height:18px;color:#23282e;letter-spacing:0.324px;right:1195.48px;">129,767,362</div>
<div class="a t" style="top:742px;font-size:12px;line-height:18px;height:18px;color:#23282e;letter-spacing:0.093px;right:1117.81px;">165</div>
<div class="a t" style="top:742px;font-size:12px;line-height:18px;height:18px;color:#23282e;letter-spacing:0.420px;right:1008.18px;">2,045,809,743</div>
<div class="a t" style="top:742px;font-size:12px;line-height:18px;height:18px;color:#23282e;letter-spacing:0.526px;right:890.074px;">933</div>
<div class="a t" style="top:742px;font-size:12px;line-height:18px;height:18px;color:#23282e;letter-spacing:0.220px;right:768.38px;">1,406,239,164</div>
<div class="a t" style="top:742px;font-size:12px;line-height:18px;height:18px;color:#23282e;letter-spacing:0.086px;right:676.314px;">14.6</div>
<div class="a t" style="top:742px;font-size:12px;line-height:18px;height:18px;color:#23282e;letter-spacing:0.460px;right:592.14px;">690,252</div>
<div class="a" style="left:329px;top:783px;width:981px;height:44px;background:#fafafa;"></div>
<div class="a" style="left:532px;top:783px;width:91.7px;height:44px;background:#43916a;"></div>
<div class="a" style="left:623.7px;top:783px;width:83.1px;height:44px;background:#ace1c4;"></div>
<div class="a" style="left:706.8px;top:783px;width:77.9px;height:44px;background:#c09400;"></div>
<div class="a" style="left:784.7px;top:783px;width:109.3px;height:44px;background:#faf8ee;"></div>
<div class="a" style="left:894px;top:783px;width:118px;height:44px;background:#d0939a;"></div>
<div class="a" style="left:1012px;top:783px;width:122px;height:44px;background:#f5d0d4;"></div>
<div class="a" style="left:1226.2px;top:783px;width:83.8px;height:44px;background:#c3e9d4;"></div>
<div class="a" style="left:329px;top:782px;width:981px;height:1px;background:#e0e0e0;"></div>
<div class="a t" style="top:787px;font-size:12px;line-height:18px;height:18px;color:#23282e;letter-spacing:0.201px;right:1370.4px;">1028</div>
<div class="a t" style="top:787px;font-size:12px;line-height:18px;height:18px;color:#23282e;letter-spacing:0.093px;right:1278.81px;">371</div>
<div class="a t" style="top:787px;font-size:12px;line-height:18px;height:18px;color:#23282e;letter-spacing:-0.030px;right:1195.83px;">179,115,189</div>
<div class="a t" style="top:787px;font-size:12px;line-height:18px;height:18px;color:#23282e;letter-spacing:-0.341px;right:1118.24px;">181</div>
<div class="a t" style="top:787px;font-size:12px;line-height:18px;height:18px;color:#23282e;letter-spacing:0.324px;right:1008.28px;">196,545,329</div>
<div class="a t" style="top:787px;font-size:12px;line-height:18px;height:18px;color:#23282e;letter-spacing:0.526px;right:890.074px;">476</div>
<div class="a t" style="top:787px;font-size:12px;line-height:18px;height:18px;color:#23282e;letter-spacing:0.442px;right:768.158px;">670,820,460</div>
<div class="a t" style="top:787px;font-size:12px;line-height:18px;height:18px;color:#23282e;letter-spacing:0.086px;right:676.314px;">36.1</div>
<div class="a t" style="top:787px;font-size:12px;line-height:18px;height:18px;color:#23282e;letter-spacing:0.460px;right:592.14px;">482,790</div>
<div class="a" style="left:329px;top:828px;width:981px;height:43px;background:#ffffff;"></div>
<div class="a" style="left:532px;top:828px;width:91.7px;height:43px;background:#a8ccba;"></div>
<div class="a" style="left:623.7px;top:828px;width:83.1px;height:43px;background:#d0eede;"></div>
<div class="a" style="left:706.8px;top:828px;width:77.9px;height:43px;background:#f6f0dc;"></div>
<div class="a" style="left:784.7px;top:828px;width:109.3px;height:43px;background:#fffefb;"></div>
<div class="a" style="left:894px;top:828px;width:118px;height:43px;background:#ca828a;"></div>
<div class="a" style="left:1012px;top:828px;width:122px;height:43px;background:#f9dade;"></div>
<div class="a" style="left:1226.2px;top:828px;width:83.8px;height:43px;background:#b8e5cc;"></div>
<div class="a" style="left:329px;top:827px;width:981px;height:1px;background:#e0e0e0;"></div>
<div class="a t" style="top:831px;font-size:12px;line-height:18px;height:18px;color:#23282e;letter-spacing:0.434px;right:1370.17px;">760.0</div>
<div class="a t" style="top:831px;font-size:12px;line-height:18px;height:18px;color:#23282e;letter-spacing:-0.341px;right:1279.24px;">171</div>
<div class="a t" style="top:831px;font-size:12px;line-height:18px;height:18px;color:#23282e;letter-spacing:0.088px;right:1195.71px;">101,281,429</div>
<div class="a t" style="top:831px;font-size:12px;line-height:18px;height:18px;color:#23282e;letter-spacing:0.526px;right:1117.37px;">25</div>
<div class="a t" style="top:831px;font-size:12px;line-height:18px;height:18px;color:#23282e;letter-spacing:0.304px;right:1008.3px;">66,693,316</div>
<div class="a t" style="top:831px;font-size:12px;line-height:18px;height:18px;color:#23282e;letter-spacing:0.526px;right:890.074px;">564</div>
<div class="a t" style="top:831px;font-size:12px;line-height:18px;height:18px;color:#23282e;letter-spacing:0.324px;right:768.276px;">546,130,662</div>
<div class="a t" style="top:831px;font-size:12px;line-height:18px;height:18px;color:#23282e;letter-spacing:0.411px;right:675.989px;">22.5</div>
<div class="a t" style="top:831px;font-size:12px;line-height:18px;height:18px;color:#23282e;letter-spacing:0.460px;right:592.14px;">592,289</div>
<div class="a" style="left:329px;top:872px;width:981px;height:44px;background:#fafafa;"></div>
<div class="a" style="left:532px;top:872px;width:91.7px;height:44px;background:#cadfd4;"></div>
<div class="a" style="left:623.7px;top:872px;width:83.1px;height:44px;background:#edf6f1;"></div>
<div class="a" style="left:706.8px;top:872px;width:77.9px;height:44px;background:#f0e8ce;"></div>
<div class="a" style="left:784.7px;top:872px;width:109.3px;height:44px;background:#faf9f6;"></div>
<div class="a" style="left:894px;top:872px;width:118px;height:44px;background:#e4c4c8;"></div>
<div class="a" style="left:1012px;top:872px;width:122px;height:44px;background:#f9f4f4;"></div>
<div class="a" style="left:1226.2px;top:872px;width:83.8px;height:44px;background:#d6efe1;"></div>
<div class="a" style="left:329px;top:871px;width:981px;height:1px;background:#e0e0e0;"></div>
<div class="a t" style="top:876px;font-size:12px;line-height:18px;height:18px;color:#23282e;letter-spacing:0.434px;right:1370.17px;">378.0</div>
<div class="a t" style="top:876px;font-size:12px;line-height:18px;height:18px;color:#23282e;letter-spacing:0.526px;right:1278.37px;">97</div>
<div class="a t" style="top:876px;font-size:12px;line-height:18px;height:18px;color:#23282e;letter-spacing:0.304px;right:1195.5px;">30,641,490</div>
<div class="a t" style="top:876px;font-size:12px;line-height:18px;height:18px;color:#23282e;letter-spacing:0.526px;right:1117.37px;">32</div>
<div class="a t" style="top:876px;font-size:12px;line-height:18px;height:18px;color:#23282e;letter-spacing:0.434px;right:1008.17px;">64,065,250</div>
<div class="a t" style="top:876px;font-size:12px;line-height:18px;height:18px;color:#23282e;letter-spacing:0.526px;right:890.074px;">249</div>
<div class="a t" style="top:876px;font-size:12px;line-height:18px;height:18px;color:#23282e;letter-spacing:0.434px;right:768.166px;">96,979,876</div>
<div class="a t" style="top:876px;font-size:12px;line-height:18px;height:18px;color:#23282e;letter-spacing:0.411px;right:675.989px;">25.7</div>
<div class="a t" style="top:876px;font-size:12px;line-height:18px;height:18px;color:#23282e;letter-spacing:0.275px;right:592.325px;">315,892</div>
<div class="a" style="left:1310px;top:693.7px;width:15px;height:230px;background:#fcfcfc;"></div>
<svg class="a" style="left:1312.7px;top:698.8px" width="9.4" height="7" viewBox="0 0 9.4 7"><path d="M1 6L4.7 1 8.4 6z" fill="#8c8c8c" stroke="#8c8c8c" stroke-width="1.6" stroke-linejoin="round"/></svg>
<div class="a" style="left:1313px;top:712px;width:8.8px;height:46.1px;background:#8c8c8c;border-radius:4.4px;"></div>
<div class="a" style="left:331.1px;top:695.4px;width:16px;height:16px;background:#e7e7e6;"></div>
<div class="a" style="left:347.1px;top:695.4px;width:16px;height:16px;background:#dcdcdc;"></div>
<div class="a" style="left:363.1px;top:695.4px;width:16px;height:16px;background:#dddddd;"></div>
<div class="a" style="left:379.1px;top:695.4px;width:16px;height:16px;background:#d9d8d7;"></div>
<div class="a" style="left:395.1px;top:695.4px;width:16px;height:16px;background:#d8dadc;"></div>
<div class="a" style="left:411.1px;top:695.4px;width:16px;height:16px;background:#e8e8e8;"></div>
<div class="a" style="left:427.1px;top:695.4px;width:32px;height:16px;background:#fcfcfc;"></div>
<div class="a" style="left:331.1px;top:711.4px;width:16px;height:16px;background:#e0e0e0;"></div>
<div class="a" style="left:347.1px;top:711.4px;width:16px;height:16px;background:#e4e4e4;"></div>
<div class="a" style="left:363.1px;top:711.4px;width:16px;height:16px;background:#e5e7e6;"></div>
<div class="a" style="left:379.1px;top:711.4px;width:16px;height:16px;background:#f8f8f8;"></div>
<div class="a" style="left:395.1px;top:711.4px;width:16px;height:16px;background:#f9f9f9;"></div>
<div class="a" style="left:411.1px;top:711.4px;width:48px;height:16px;background:#fcfcfc;"></div>
<div class="a" style="left:331.1px;top:727.4px;width:16px;height:16px;background:#f7f7f7;"></div>
<div class="a" style="left:347.1px;top:727.4px;width:32px;height:16px;background:#f8f8f8;"></div>
<div class="a" style="left:379.1px;top:727.4px;width:16px;height:16px;background:#fbfbfb;"></div>
<div class="a" style="left:395.1px;top:727.4px;width:64px;height:16px;background:#fcfcfc;"></div>
<div class="a" style="left:331.1px;top:743.4px;width:16px;height:16px;background:#e3e3e3;"></div>
<div class="a" style="left:347.1px;top:743.4px;width:16px;height:16px;background:#dddcdb;"></div>
<div class="a" style="left:363.1px;top:743.4px;width:16px;height:16px;background:#dcdde0;"></div>
<div class="a" style="left:379.1px;top:743.4px;width:16px;height:16px;background:#dfdfde;"></div>
<div class="a" style="left:395.1px;top:743.4px;width:16px;height:16px;background:#d9d9d9;"></div>
<div class="a" style="left:411.1px;top:743.4px;width:16px;height:16px;background:#f6f8f8;"></div>
<div class="a" style="left:427.1px;top:743.4px;width:32px;height:16px;background:#ffffff;"></div>
<div class="a" style="left:331.1px;top:759.4px;width:16px;height:16px;background:#dddddd;"></div>
<div class="a" style="left:347.1px;top:759.4px;width:16px;height:16px;background:#e0e0e0;"></div>
<div class="a" style="left:363.1px;top:759.4px;width:16px;height:16px;background:#dadada;"></div>
<div class="a" style="left:379.1px;top:759.4px;width:16px;height:16px;background:#e5e5e5;"></div>
<div class="a" style="left:395.1px;top:759.4px;width:64px;height:16px;background:#ffffff;"></div>
<div class="a" style="left:331.1px;top:775.4px;width:16px;height:16px;background:#f8f8f8;"></div>
<div class="a" style="left:347.1px;top:775.4px;width:16px;height:16px;background:#f8f8f6;"></div>
<div class="a" style="left:363.1px;top:775.4px;width:16px;height:16px;background:#f7f9f8;"></div>
<div class="a" style="left:379.1px;top:775.4px;width:16px;height:16px;background:#fbfbfb;"></div>
<div class="a" style="left:395.1px;top:775.4px;width:64px;height:16px;background:#fcfcfc;"></div>
<div class="a" style="left:331.1px;top:791.4px;width:16px;height:16px;background:#e5e5e4;"></div>
<div class="a" style="left:347.1px;top:791.4px;width:16px;height:16px;background:#dcdcdb;"></div>
<div class="a" style="left:363.1px;top:791.4px;width:16px;height:16px;background:#dadadc;"></div>
<div class="a" style="left:379.1px;top:791.4px;width:16px;height:16px;background:#d8d7d6;"></div>
<div class="a" style="left:395.1px;top:791.4px;width:16px;height:16px;background:#d6d8db;"></div>
<div class="a" style="left:411.1px;top:791.4px;width:16px;height:16px;background:#eff1f4;"></div>
<div class="a" style="left:427.1px;top:791.4px;width:32px;height:16px;background:#fcfcfc;"></div>
<div class="a" style="left:331.1px;top:807.4px;width:16px;height:16px;background:#e2e2e2;"></div>
<div class="a" style="left:347.1px;top:807.4px;width:16px;height:16px;background:#dcdcdc;"></div>
<div class="a" style="left:363.1px;top:807.4px;width:16px;height:16px;background:#d3d3d3;"></div>
<div class="a" style="left:379.1px;top:807.4px;width:16px;height:16px;background:#e7e9eb;"></div>
<div class="a" style="left:395.1px;top:807.4px;width:64px;height:16px;background:#fcfcfc;"></div>
<div class="a" style="left:331.1px;top:823.4px;width:16px;height:16px;background:#f1f1f0;"></div>
<div class="a" style="left:347.1px;top:823.4px;width:16px;height:16px;background:#ededed;"></div>
<div class="a" style="left:363.1px;top:823.4px;width:16px;height:16px;background:#eeeeee;"></div>
<div class="a" style="left:379.1px;top:823.4px;width:16px;height:16px;background:#f1f1f1;"></div>
<div class="a" style="left:395.1px;top:823.4px;width:16px;height:16px;background:#f3f3f3;"></div>
<div class="a" style="left:411.1px;top:823.4px;width:16px;height:16px;background:#f4f5f5;"></div>
<div class="a" style="left:427.1px;top:823.4px;width:32px;height:16px;background:#fcfcfc;"></div>
<div class="a" style="left:331.1px;top:839.4px;width:48px;height:16px;background:#e8e8e8;"></div>
<div class="a" style="left:379.1px;top:839.4px;width:16px;height:16px;background:#e4e4e4;"></div>
<div class="a" style="left:395.1px;top:839.4px;width:16px;height:16px;background:#e8e7e6;"></div>
<div class="a" style="left:411.1px;top:839.4px;width:16px;height:16px;background:#e4e5e8;"></div>
<div class="a" style="left:427.1px;top:839.4px;width:32px;height:16px;background:#ffffff;"></div>
<div class="a" style="left:331.1px;top:855.4px;width:16px;height:16px;background:#e4e4e3;"></div>
<div class="a" style="left:347.1px;top:855.4px;width:16px;height:16px;background:#d5d7da;"></div>
<div class="a" style="left:363.1px;top:855.4px;width:16px;height:16px;background:#e3e1e2;"></div>
<div class="a" style="left:379.1px;top:855.4px;width:16px;height:16px;background:#e3e5e9;"></div>
<div class="a" style="left:395.1px;top:855.4px;width:64px;height:16px;background:#ffffff;"></div>
<div class="a" style="left:331.1px;top:871.4px;width:16px;height:16px;background:#e8e8e7;"></div>
<div class="a" style="left:347.1px;top:871.4px;width:16px;height:16px;background:#e0e1e2;"></div>
<div class="a" style="left:363.1px;top:871.4px;width:16px;height:16px;background:#e7e7e7;"></div>
<div class="a" style="left:379.1px;top:871.4px;width:16px;height:16px;background:#dddddd;"></div>
<div class="a" style="left:395.1px;top:871.4px;width:16px;height:16px;background:#dfdfdf;"></div>
<div class="a" style="left:411.1px;top:871.4px;width:16px;height:16px;background:#e4e4e3;"></div>
<div class="a" style="left:427.1px;top:871.4px;width:16px;height:16px;background:#eff0f3;"></div>
<div class="a" style="left:443.1px;top:871.4px;width:16px;height:16px;background:#fafafa;"></div>
<div class="a" style="left:331.1px;top:887.4px;width:16px;height:16px;background:#e5e5e5;"></div>
<div class="a" style="left:347.1px;top:887.4px;width:16px;height:16px;background:#dcdcdc;"></div>
<div class="a" style="left:363.1px;top:887.4px;width:16px;height:16px;background:#e2e4e7;"></div>
<div class="a" style="left:379.1px;top:887.4px;width:16px;height:16px;background:#f4f4f4;"></div>
<div class="a" style="left:395.1px;top:887.4px;width:16px;height:16px;background:#f3f3f3;"></div>
<div class="a" style="left:411.1px;top:887.4px;width:16px;height:16px;background:#f4f4f4;"></div>
<div class="a" style="left:427.1px;top:887.4px;width:16px;height:16px;background:#f9f9f9;"></div>
<div class="a" style="left:443.1px;top:887.4px;width:16px;height:16px;background:#fcfcfc;"></div>
<div class="a" style="left:331.1px;top:903.4px;width:16px;height:16px;background:#f1f1f1;"></div>
<div class="a" style="left:347.1px;top:903.4px;width:16px;height:16px;background:#e9e8e6;"></div>
<div class="a" style="left:363.1px;top:903.4px;width:16px;height:16px;background:#e7e9ec;"></div>
<div class="a" style="left:379.1px;top:903.4px;width:48px;height:16px;background:#fafafa;"></div>
<div class="a" style="left:427.1px;top:903.4px;width:32px;height:16px;background:#fcfcfc;"></div>
<div class="a t" style="top:598px;font-size:14px;line-height:20px;height:20px;color:#1e242c;-webkit-text-stroke:0.2px #1e242c;letter-spacing:0.627px;left:1388.7px;">Нагрузка на сотрудников</div>
<svg class="a" style="left:1508px;top:680px" width="240" height="231" viewBox="0 0 240 231"><path d="M120.5 123.7L120.50 12.10A111.6 111.6 0 0 1 228.04 93.88Z" fill="#7a2cb0"/><path d="M120.5 123.7L228.04 93.88A111.6 111.6 0 0 1 179.80 218.24Z" fill="#9d64cb"/><path d="M120.5 123.7L179.80 218.24A111.6 111.6 0 0 1 70.88 223.66Z" fill="#f4b02f"/><path d="M120.5 123.7L70.88 223.66A111.6 111.6 0 0 1 15.70 162.05Z" fill="#ef8469"/><path d="M120.5 123.7L15.70 162.05A111.6 111.6 0 0 1 8.92 121.75Z" fill="#7a2cb0"/><path d="M120.5 123.7L8.92 121.75A111.6 111.6 0 0 1 16.67 82.80Z" fill="#c871c9"/><path d="M120.5 123.7L16.67 82.80A111.6 111.6 0 0 1 33.53 53.77Z" fill="#8f1d50"/><path d="M120.5 123.7L33.53 53.77A111.6 111.6 0 0 1 48.91 38.08Z" fill="#b47800"/><path d="M120.5 123.7L48.91 38.08A111.6 111.6 0 0 1 65.04 26.86Z" fill="#9c3597"/><path d="M120.5 123.7L65.04 26.86A111.6 111.6 0 0 1 80.87 19.37Z" fill="#9c3597"/><path d="M120.5 123.7L80.87 19.37A111.6 111.6 0 0 1 95.59 14.92Z" fill="#e5689e"/><path d="M120.5 123.7L95.59 14.92A111.6 111.6 0 0 1 108.25 12.77Z" fill="#c5300e"/><path d="M120.5 123.7L108.25 12.77A111.6 111.6 0 0 1 113.88 12.30Z" fill="#9d64cb"/><path d="M120.5 123.7L113.88 12.30A111.6 111.6 0 0 1 117.97 12.13Z" fill="#236b6b"/><path d="M120.5 123.7L117.97 12.13A111.6 111.6 0 0 1 118.65 12.12Z" fill="#86cfcb"/><path d="M120.5 123.7L118.65 12.12A111.6 111.6 0 0 1 119.82 12.10Z" fill="#e08fa0"/><path d="M120.5 123.7L119.82 12.10A111.6 111.6 0 0 1 120.50 12.10Z" fill="#c9a0b8"/></svg>
<div class="a" style="left:1393.2px;top:631.6px;width:25px;height:14px;background:#7a2cb0;border-radius:3.5px;"></div>
<div class="a" style="left:1521.6px;top:631.6px;width:25px;height:14px;background:#9d64cb;border-radius:3.5px;"></div>
<div class="a" style="left:1660px;top:631.6px;width:25px;height:14px;background:#f4b02f;border-radius:3.5px;"></div>
<div class="a t" style="top:629px;font-size:12px;line-height:18px;height:18px;color:#3a3f47;left:1424px;">А</div>
<div class="a t" style="top:629px;font-size:12px;line-height:18px;height:18px;color:#3a3f47;left:1505.4px;">в</div>
<div class="a" style="left:1425.6px;top:632.1px;width:16px;height:12.5px;background:#d9d9d9;"></div>
<div class="a" style="left:1441.6px;top:632.1px;width:16px;height:12.5px;background:#d0d0d0;"></div>
<div class="a" style="left:1457.6px;top:632.1px;width:16px;height:12.5px;background:#dfdfdf;"></div>
<div class="a" style="left:1473.6px;top:632.1px;width:16px;height:12.5px;background:#d2d2d2;"></div>
<div class="a" style="left:1489.6px;top:632.1px;width:16px;height:12.5px;background:#dedede;"></div>
<div class="a" style="left:1505.6px;top:632.1px;width:3.4px;height:12.5px;background:#cfcfcf;"></div>
<div class="a t" style="top:629px;font-size:12px;line-height:18px;height:18px;color:#3a3f47;left:1552px;">Ни</div>
<div class="a t" style="top:629px;font-size:12px;line-height:18px;height:18px;color:#8a8d92;left:1594.5px;">Г</div>
<div class="a t" style="top:629px;font-size:12px;line-height:18px;height:18px;color:#3a3f47;left:1637.5px;">ов</div>
<div class="a" style="left:1567.7px;top:634.5px;width:16px;height:10.6px;background:#d4d4d4;"></div>
<div class="a" style="left:1583.7px;top:634.5px;width:16px;height:10.6px;background:#dcdcdc;"></div>
<div class="a" style="left:1599.7px;top:634.5px;width:16px;height:10.6px;background:#d0d0d0;"></div>
<div class="a" style="left:1615.7px;top:634.5px;width:16px;height:10.6px;background:#cecece;"></div>
<div class="a" style="left:1631.7px;top:634.5px;width:6.1px;height:10.6px;background:#d2d2d2;"></div>
<div class="a t" style="top:629px;font-size:12px;line-height:18px;height:18px;color:#3a3f47;left:1689.6px;">I</div>
<div class="a" style="left:1691.8px;top:632px;width:16px;height:12.2px;background:#cfcfcf;"></div>
<div class="a" style="left:1707.8px;top:632px;width:9.4px;height:12.2px;background:#d6d6d6;"></div>
<div class="a" style="left:1716px;top:630px;width:11px;height:18px;overflow:hidden"><div class="a t" style="left:0;top:0;font-size:12px;line-height:17px;color:#3a3f47">ин</div></div>
<svg class="a" style="left:1737.2px;top:632px" width="9" height="13" viewBox="0 0 9 13"><path d="M9 0L0 6.5 9 13z" fill="#aaaaaa"/></svg>
<div class="a t" style="top:629px;font-size:12px;line-height:18px;height:18px;color:#3a3f47;letter-spacing:0.376px;left:1753.7px;">1/13</div>
<svg class="a" style="left:1785.7px;top:632px" width="9" height="13" viewBox="0 0 9 13"><path d="M0 0L9 6.5 0 13z" fill="#2f4554"/></svg>
<div class="a" style="left:1804.7px;top:629.7px;width:24.5px;height:17px;border:1px solid #666;border-radius:8.5px;box-sizing:border-box;"></div>
<div class="a t" style="top:629px;font-size:12px;line-height:18px;height:18px;color:#777;left:1517.1px;width:600px;text-align:center;">All</div>
<div class="a" style="left:1836.5px;top:629.7px;width:27.8px;height:17px;border:1px solid #666;border-radius:8.5px;box-sizing:border-box;"></div>
<div class="a t" style="top:629px;font-size:12px;line-height:18px;height:18px;color:#777;left:1550.5px;width:600px;text-align:center;">Inv</div>
<div class="a" style="left:1724.5px;top:690.1px;width:16px;height:15.8px;background:#d6d6d6;"></div>
<div class="a" style="left:1740.5px;top:690.1px;width:16px;height:15.8px;background:#d9d9d9;"></div>
<div class="a" style="left:1756.5px;top:690.1px;width:16px;height:15.8px;background:#d6d6d6;"></div>
<div class="a" style="left:1772.5px;top:690.1px;width:16px;height:15.8px;background:#dadada;"></div>
<div class="a" style="left:1788.5px;top:690.1px;width:16px;height:15.8px;background:#dcdcdc;"></div>
<div class="a" style="left:1804.5px;top:690.1px;width:14.1px;height:15.8px;background:#e3e3e3;"></div>
<div class="a" style="left:1740.5px;top:705.9px;width:16px;height:6px;background:#f3f3f3;"></div>
<div class="a" style="left:1756.5px;top:705.9px;width:16px;height:6px;background:#fbfbfb;"></div>
<div class="a" style="left:1772.5px;top:705.9px;width:16px;height:6px;background:#f4f4f4;"></div>
<div class="a" style="left:1390.4px;top:763.9px;width:16px;height:15.9px;background:#e4e4e4;"></div>
<div class="a" style="left:1406.4px;top:763.9px;width:16px;height:15.9px;background:#dddddd;"></div>
<div class="a" style="left:1422.4px;top:763.9px;width:16px;height:15.9px;background:#e0e0e0;"></div>
<div class="a" style="left:1438.4px;top:763.9px;width:16px;height:15.9px;background:#d8d8d8;"></div>
<div class="a" style="left:1454.4px;top:763.9px;width:16px;height:15.9px;background:#dcdcdc;"></div>
<div class="a" style="left:1470.4px;top:763.9px;width:16px;height:15.9px;background:#dfdfdf;"></div>
<div class="a" style="left:1390.4px;top:779.8px;width:16px;height:16px;background:#f7f7f7;"></div>
<div class="a" style="left:1406.4px;top:779.8px;width:16px;height:16px;background:#f3f3f3;"></div>
<div class="a" style="left:1422.4px;top:779.8px;width:16px;height:16px;background:#f6f6f6;"></div>
<div class="a" style="left:1438.4px;top:779.8px;width:16px;height:16px;background:#f1f1f1;"></div>
<div class="a" style="left:1454.4px;top:779.8px;width:16px;height:16px;background:#f2f2f2;"></div>
<div class="a" style="left:1470.4px;top:779.8px;width:16px;height:16px;background:#f5f5f5;"></div>
<div class="a" style="left:1422.2px;top:811.9px;width:16px;height:16.1px;background:#e1e1e1;"></div>
<div class="a" style="left:1438.2px;top:811.9px;width:16px;height:16.1px;background:#d6d6d6;"></div>
<div class="a" style="left:1454.2px;top:811.9px;width:16px;height:16.1px;background:#d9d9d9;"></div>
<div class="a" style="left:1470.2px;top:811.9px;width:16px;height:16.1px;background:#e7e7e7;"></div>
<div class="a" style="left:1454.2px;top:828px;width:16px;height:15.5px;background:#fafafa;"></div>
<div class="a" style="left:1760.2px;top:842.2px;width:16px;height:15px;background:#e6e6e6;"></div>
<div class="a" style="left:1776.2px;top:842.2px;width:16px;height:15px;background:#d9d9d9;"></div>
<div class="a" style="left:1792.2px;top:842.2px;width:16px;height:15px;background:#dbdbdb;"></div>
<div class="a" style="left:1808.2px;top:842.2px;width:16px;height:15px;background:#d0d0d0;"></div>
<div class="a" style="left:1824.2px;top:842.2px;width:16px;height:15px;background:#f6f6f6;"></div>
<div class="a" style="left:1390.4px;top:875.7px;width:16px;height:16.1px;background:#f3f3f3;"></div>
<div class="a" style="left:1406.4px;top:875.7px;width:16px;height:16.1px;background:#d6d6d6;"></div>
<div class="a" style="left:1422.4px;top:875.7px;width:16px;height:16.1px;background:#dadada;"></div>
<div class="a" style="left:1438.4px;top:875.7px;width:16px;height:16.1px;background:#d7d7d7;"></div>
<div class="a" style="left:1454.4px;top:875.7px;width:16px;height:16.1px;background:#d5d5d5;"></div>
<div class="a" style="left:1470.4px;top:875.7px;width:16px;height:16.1px;background:#d9d9d9;"></div>
<div class="a" style="left:1486.4px;top:875.7px;width:16px;height:16.1px;background:#dedede;"></div>
<div class="a" style="left:1502.4px;top:875.7px;width:13.2px;height:16.1px;background:#dedede;"></div>
<div class="a" style="left:1454.4px;top:891.8px;width:16px;height:9px;background:#f6f6f6;"></div>
<div class="a" style="left:1470.4px;top:891.8px;width:16px;height:9px;background:#f8f8f8;"></div>
<div class="a" style="left:1486.4px;top:891.8px;width:16px;height:9px;background:#f9f9f9;"></div>
<div class="a" style="left:1502.4px;top:891.8px;width:13.2px;height:9px;background:#f7f7f7;"></div>
</body></html>
